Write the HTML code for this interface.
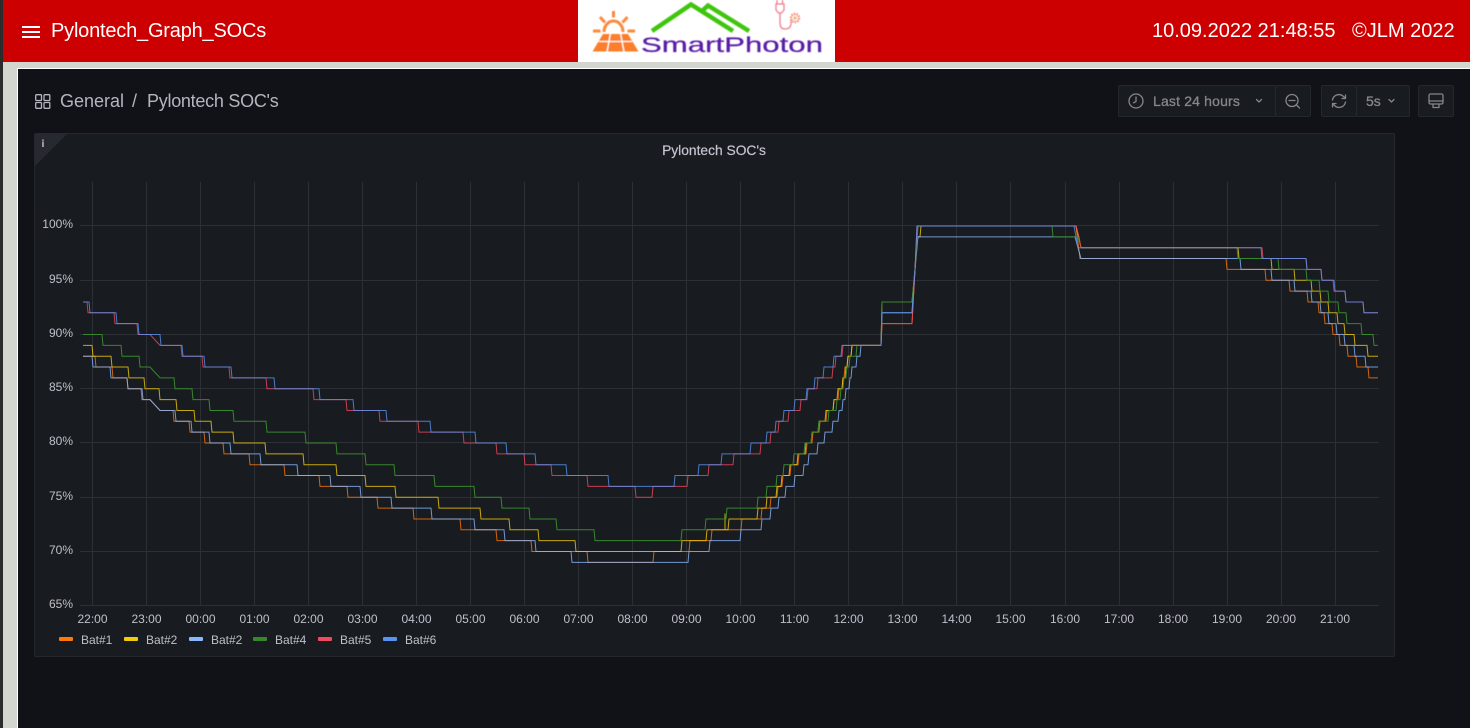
<!DOCTYPE html>
<html>
<head>
<meta charset="utf-8">
<title>Pylontech_Graph_SOCs</title>
<style>
html,body{margin:0;padding:0;width:1470px;height:728px;overflow:hidden;background:#d3d5cf;font-family:"Liberation Sans",sans-serif}
.abs{position:absolute}
#left{left:0;top:0;width:3px;height:728px;background:#2b2b2b}
#hdr{left:3px;top:0;width:1467px;height:62px;background:#cc0000}
#logo{left:578px;top:0;width:257px;height:62px;background:#fff}
#burger span{position:absolute;left:22px;width:18px;height:2px;background:#fff}
.ht{color:#fff;font-size:20px;line-height:24px;white-space:nowrap}
#main{left:17px;top:68px;width:1453px;height:660px;background:#111217;border-left:1px solid #fff;border-top:1px solid #fff;box-sizing:border-box}
.crumb{color:#b4b5bf;font-size:18px;line-height:22px;white-space:nowrap}
.btn{background:#181b1f;border:1px solid #24272b;border-radius:2px;box-sizing:border-box;height:32px;top:85px}
.tb{color:#85868d;font-size:14px;font-weight:400;line-height:18px;white-space:nowrap;-webkit-text-stroke:.3px #85868d}
#panel{left:34px;top:133px;width:1361px;height:524px;background:#181b1f;border:1px solid #24272b;border-radius:2px;box-sizing:border-box}
</style>
</head>
<body>
<div class="abs" id="left"></div>
<div class="abs" id="hdr"></div>
<div id="burger"><span style="top:26px"></span><span style="top:31px"></span><span style="top:36px"></span></div>
<div class="abs ht" id="t1" style="left:51px;top:19px;letter-spacing:-.2px">Pylontech_Graph_SOCs</div>
<div class="abs ht" style="left:1152px;top:19px;letter-spacing:0">10.09.2022 21:48:55</div>
<div class="abs ht" style="left:1352px;top:19px;letter-spacing:0">©JLM 2022</div>

<div class="abs" id="logo">
<svg width="257" height="62" viewBox="578 0 257 62" style="display:block">
  <defs><filter id="b" x="-5%" y="-5%" width="110%" height="110%"><feGaussianBlur stdDeviation=".45"/></filter></defs>
  <g filter="url(#b)">
  <g fill="none" stroke="#f98a3c" stroke-width="3">
    <path d="M604 32a9.500 11 0 0 1 19 0" />
    <path d="M613.500 11v6.500M600 17l5 5.500M627.500 17l-5 5.500M593 31h7.500M627.500 31h7.500" />
  </g>
  <path d="M603 34H628L638.500 51.500H592.500Z" fill="#fb7f2b"/>
  <g stroke="#fff" stroke-width="1.300" fill="none">
    <path d="M599 41.500H632M610.500 33L607 52M620.500 33L624 52"/>
  </g>
  <g fill="none" stroke="#3fc50a" stroke-width="4.500">
    <path d="M652 31L691 4.500L733 31"/>
    <path d="M702 11L708 5.500L749 31"/>
  </g>
  <g fill="none" stroke="#ef7f8e" stroke-width="1.300">
    <path d="M777 0v4M782.500 0v4M776 4h8v6l-2.500 3h-3l-2.500-3z"/>
    <path d="M780 13v10q0 6 5 6q6 0 6-6v-3"/>
  </g>
  <circle cx="795" cy="18" r="4" fill="none" stroke="#f28a6c" stroke-width="2.400" stroke-dasharray="1.500 1"/>
  <circle cx="795" cy="18" r="1.600" fill="#f7b08a"/>
  <text x="641" y="52" font-family="'Liberation Sans',sans-serif" font-size="21" fill="#5a1ea6" stroke="#5a1ea6" stroke-width=".25" textLength="182" lengthAdjust="spacingAndGlyphs">SmartPhoton</text>
  </g>
</svg>
</div>

<div class="abs" id="main"></div>

<svg class="abs" style="left:35px;top:94px" width="16" height="15" viewBox="0 0 16 15">
  <g fill="none" stroke="#b4b5be" stroke-width="1.300">
    <rect x=".7" y=".7" width="5.800" height="5.800" rx=".8"/><rect x="9" y=".7" width="5.800" height="5.800" rx=".8"/>
    <rect x=".7" y="8.500" width="5.800" height="5.800" rx=".8"/><rect x="9" y="8.500" width="5.800" height="5.800" rx=".8"/>
  </g>
</svg>
<div class="abs crumb" style="left:60px;top:90px">General</div>
<div class="abs crumb" style="left:132px;top:90px">/</div>
<div class="abs crumb" style="left:147px;top:90px;letter-spacing:-.27px">Pylontech SOC's</div>

<div class="abs btn" style="left:1118px;width:158px;border-right:none"></div>
<div class="abs btn" style="left:1275px;width:36px"></div>
<div class="abs btn" style="left:1321px;width:36px"></div>
<div class="abs btn" style="left:1356px;width:54px"></div>
<div class="abs btn" style="left:1418px;width:36px"></div>
<div class="abs tb" style="left:1153px;top:92px;letter-spacing:.17px">Last 24 hours</div>
<div class="abs tb" style="left:1366px;top:92px">5s</div>
<svg class="abs" style="left:1100px;top:70px" width="370" height="60" viewBox="1100 70 370 60">
  <g fill="none" stroke="#85868d" stroke-width="1.300" stroke-linecap="round" stroke-linejoin="round">
    <circle cx="1136" cy="101" r="7"/><path d="M1136 97v4.500l-2.500 1.300"/>
    <path d="M1256.500 99.500l2.500 2.500 2.500-2.500"/>
    <circle cx="1292" cy="100.500" r="6"/><path d="M1289 100.500h6M1296.500 105l3 3"/>
    <path d="M1332.500 100a6.500 6.500 0 0 1 11-3.500l2 2M1345.500 95v3.500H1342"/>
    <path d="M1345.500 102a6.500 6.500 0 0 1-11 3.500l-2-2M1332.500 107v-3.500H1336"/>
    <path d="M1389 99.500l2.500 2.500 2.500-2.500"/>
    <rect x="1429" y="94" width="14" height="10" rx="1.500"/><path d="M1429 101h14M1433 104v3.500h6V104"/>
  </g>
</svg>

<div class="abs" id="panel"></div>

<svg class="abs" style="left:0;top:0" width="1470" height="728" viewBox="0 0 1470 728">
  <path d="M35 134H67L35 166Z" fill="#262a30"/>
  <text x="43" y="147" font-family="'DejaVu Sans',sans-serif" font-size="10" font-weight="700" fill="#a5a7ad" text-anchor="middle">i</text>
  <text x="714" y="155" font-family="'Liberation Sans',sans-serif" font-size="13.800" fill="#c4c4d2" stroke="#c4c4d2" stroke-width=".2" text-anchor="middle">Pylontech SOC's</text>

  <g stroke="#2c2f33" stroke-width="1" fill="none">
    <path d="M80 225.500H1379M80 280.500H1379M80 334.500H1379M80 388.500H1379M80 442.500H1379M80 497.500H1379M80 551.500H1379M80 605.500H1379"/>
    <path d="M92.500 182V605M146.500 182V605M200.500 182V605M254.500 182V605M308.500 182V605M362.500 182V605M416.500 182V605M470.500 182V605M524.500 182V605M578.500 182V605M632.500 182V605M686.500 182V605M740.500 182V605M794.500 182V605M848.500 182V605M902.500 182V605M956.500 182V605M1010.500 182V605M1065.500 182V605M1119.500 182V605M1173.500 182V605M1227.500 182V605M1281.500 182V605M1335.500 182V605"/>
  </g>

  <g font-family="'Liberation Sans',sans-serif" font-size="12" fill="#bfc0cb" text-anchor="end">
    <text x="73" y="228">100%</text><text x="73" y="283">95%</text><text x="73" y="337">90%</text><text x="73" y="391">85%</text><text x="73" y="445">80%</text><text x="73" y="500">75%</text><text x="73" y="554">70%</text><text x="73" y="608">65%</text>
  </g>
  <g font-family="'Liberation Sans',sans-serif" font-size="12" fill="#bfc0cb" text-anchor="middle">
    <text x="92.500" y="623">22:00</text><text x="146.500" y="623">23:00</text><text x="200.500" y="623">00:00</text><text x="254.500" y="623">01:00</text><text x="308.500" y="623">02:00</text><text x="362.500" y="623">03:00</text><text x="416.500" y="623">04:00</text><text x="470.500" y="623">05:00</text><text x="524.500" y="623">06:00</text><text x="578.500" y="623">07:00</text><text x="632.500" y="623">08:00</text><text x="686.500" y="623">09:00</text><text x="740.500" y="623">10:00</text><text x="794.500" y="623">11:00</text><text x="848.500" y="623">12:00</text><text x="902.500" y="623">13:00</text><text x="956.500" y="623">14:00</text><text x="1010.500" y="623">15:00</text><text x="1065" y="623">16:00</text><text x="1119" y="623">17:00</text><text x="1173" y="623">18:00</text><text x="1227" y="623">19:00</text><text x="1281" y="623">20:00</text><text x="1335" y="623">21:00</text>
  </g>

  <g transform="translate(0,1311) scale(1,-10.85)" fill="none" stroke-width="1" stroke-opacity=".8" stroke-linejoin="miter">
    <path vector-effect="non-scaling-stroke" stroke="#FF780A" d="M83 88H95l1-1H112l1-1H127l1-1H141l1-1H150L160 83H173l1-1H189l1-1H204l1-1H223l1-1H249l1-1H284l1-1H319l1-1H347l1-1H377l1-1H413l1-1H460l1-1H496l1-1H531l1-1H587l1-1H653l1 1H689l1 1H711l1 1H741l1 1H761l1 1H770l1 1H777l1 1H782l1 1H790l1 1H798l1 1H806l1 1H812l1 1H819l1 1H826l1 1H833l1 1H838l1 1H842l1 1H844l1 1H847l1 1H851l1 1H881L882 91H912L915 96L917 99L918 100H1076L1080 97H1226l1-1H1265l1-1H1289l1-1H1307l1-1H1318l1-1H1324l1-1H1332l1-1H1339l1-1H1347l1-1H1356l1-1H1368l1-1H1378"/>
    <path vector-effect="non-scaling-stroke" stroke="#F2CC0C" d="M83 89H92l1-1H111l1-1H128l1-1H144l1-1H159l1-1H176l1-1H194l1-1H211l1-1H233l1-1H265l1-1H303l1-1H336l1-1H365l1-1H395l1-1H438l1-1H480l1-1H509l1-1H538l1-1H575l1-1H681l1 1H706l1 1H725V73.500V72H728l1 1H757l1 1H766l1 1H776l1 1H781l1 1H789l1 1H797l1 1H805l1 1H811l1 1H818l1 1H825l1 1H833l1 1H837l1 1H842l1 1H845l1 1H847l1 1H851l1 1H881L882 93H912L915 96L917 99H920l1 1H1076L1081 98H1238l1-1H1271l1-1H1294l1-1H1311l1-1H1320l1-1H1328l1-1H1337l1-1H1344l1-1H1354l1-1H1367l1-1H1378"/>
    <path vector-effect="non-scaling-stroke" stroke="#8AB8FF" d="M83 88H92l1-1H110l1-1H127l1-1H142l1-1H150L160 83H175l1-1H191l1-1H209l1-1H230l1-1H260l1-1H297l1-1H330l1-1H360l1-1H391l1-1H431l1-1H474l1-1H504l1-1H535l1-1H571l1-1H688l1 1H709l1 1H740l1 1H761l1 1H770l1 1H778l1 1H785l1 1H794l1 1H803l1 1H808l1 1H817l1 1H824l1 1H832l1 1H838l1 1H842l1 1H845l1 1H849l1 1H851l1 1H856l1 1H860l1 1H881L882 92H912L915 96L918 99H1075L1078 98L1081 97H1240l1-1H1271l1-1H1294l1-1H1311l1-1H1320l1-1H1328l1-1H1336l1-1H1344l1-1H1354l1-1H1365l1-1H1378"/>
    <path vector-effect="non-scaling-stroke" stroke="#37872D" stroke-opacity="1" d="M83 90H102l1-1H121l1-1H139l1-1H150L160 86H174l1-1H192l1-1H209l1-1H233l1-1H266l1-1H305l1-1H336l1-1H365l1-1H394l1-1H434l1-1H474l1-1H501l1-1H529l1-1H556l1-1H594l1-1H681l1 1H705l1 1H726l1 1H757l1 1H766l1 1H776l1 1H783l1 1H793l1 1H804l1 1H811l1 1H818l1 1H828l1 1H836l1 1H840l1 1H843l1 1H846l1 1H849l1 1H856l1 1H881L882 93H912L915 96L918 100H1052l1-1H1078L1081 98H1237l1-1H1278l1-1H1306l1-1H1319l1-1H1328l1-1H1338l1-1H1346l1-1H1361l1-1H1373l1-1H1378"/>
    <path vector-effect="non-scaling-stroke" stroke="#F2495C" d="M83 93H87l1-1H114l1-1H137l1-1H150L160 89H181l1-1H202l1-1H229l1-1H266l1-1H313l1-1H346l1-1H379l1-1H418l1-1H463l1-1H496l1-1H524l1-1H551l1-1H587l1-1H635l1-1H652l1 1H687l1 1H708l1 1H733l1 1H760l1 1H770l1 1H778l1 1H788l1 1H800l1 1H807l1 1H817l1 1H832l1 1H835l1 1H842l1 1H881L882 91H912L915 96L917 100H1076L1079 99L1081 98H1262l1-1H1306l1-1H1321l1-1H1333l1-1H1345l1-1H1363l1-1H1378"/>
    <path vector-effect="non-scaling-stroke" stroke="#5794F2" d="M83 93H89l1-1H116l1-1H138l1-1H160l1-1H182l1-1H204l1-1H231l1-1H274l1-1H319l1-1H353l1-1H386l1-1H430l1-1H475l1-1H506l1-1H535l1-1H566l1-1H608l1-1H674l1 1H698l1 1H721l1 1H750l1 1H766l1 1H775l1 1H783l1 1H794l1 1H806l1 1H814l1 1H823l1 1H833l1 1H841l1 1H881L882 92H912L915 96L917 100H1074L1078 98H1261l1-1H1306l1-1H1321l1-1H1334l1-1H1345l1-1H1363l1-1H1378"/>
  </g>

  <g>
    <rect x="59" y="637" width="14" height="4" rx="1" fill="#FF780A"/>
    <rect x="124" y="637" width="14" height="4" rx="1" fill="#F2CC0C"/>
    <rect x="189" y="637" width="14" height="4" rx="1" fill="#8AB8FF"/>
    <rect x="253" y="637" width="14" height="4" rx="1" fill="#37872D"/>
    <rect x="318" y="637" width="14" height="4" rx="1" fill="#F2495C"/>
    <rect x="383" y="637" width="14" height="4" rx="1" fill="#5794F2"/>
  </g>
  <g font-family="'Liberation Sans',sans-serif" font-size="12" fill="#bfc0cb">
    <text x="81" y="644">Bat#1</text><text x="146" y="644">Bat#2</text><text x="211" y="644">Bat#2</text><text x="275" y="644">Bat#4</text><text x="340" y="644">Bat#5</text><text x="405" y="644">Bat#6</text>
  </g>
</svg>
</body>
</html>
